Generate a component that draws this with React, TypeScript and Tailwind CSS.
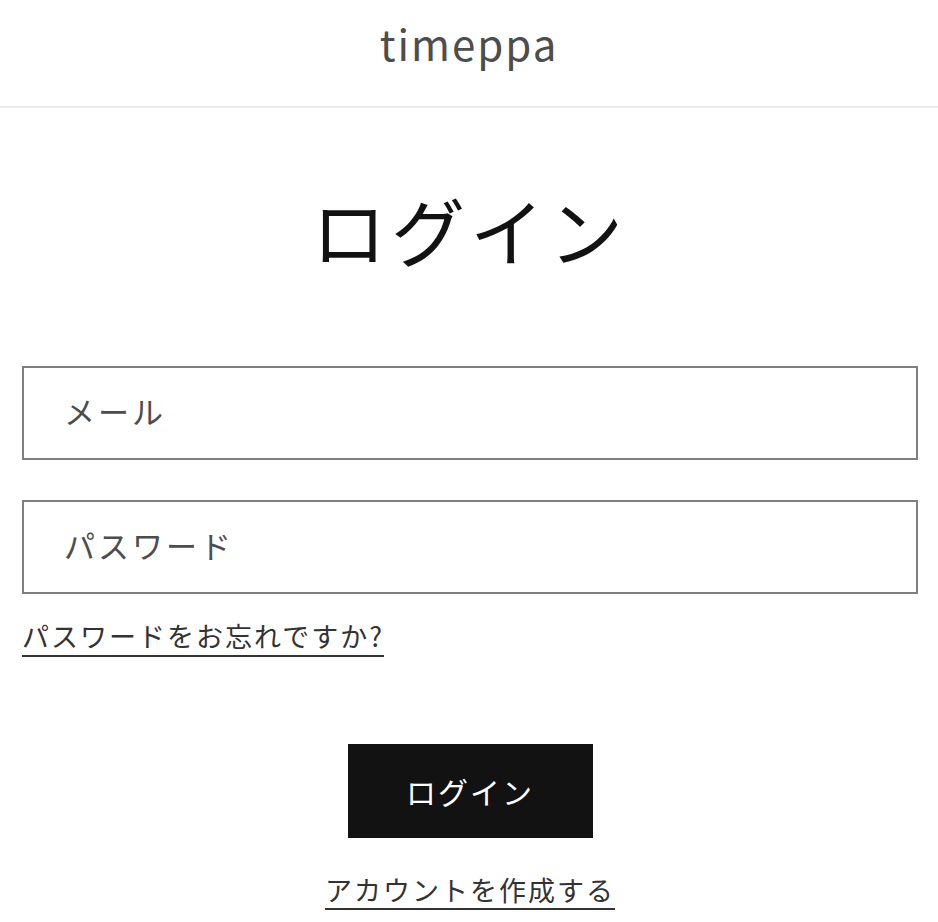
import React from 'react';

const font = { fontFamily: '"Noto Sans CJK JP", "Noto Sans", sans-serif' };

const Field: React.FC<{ label: string; type?: string }> = ({ label, type = 'text' }) => (
  <div className="h-[94px] border-2 border-[#7f7f7f] bg-white flex items-center">
    <input
      type={type}
      placeholder={label}
      className="w-full h-full pl-[40px] pr-4 pb-[6px] bg-transparent outline-none text-[31px] tracking-[3px] text-[#121212] placeholder:text-[#4d4d4d]"
    />
  </div>
);

export default function App() {
  return (
    <div className="min-h-[922px] bg-white text-[#121212]" style={font}>
      <header className="h-[108px] border-b-2 border-[#ebebeb] flex items-center justify-center">
        <span className="text-[42px] tracking-[2px] text-[#4d4d4d] leading-none -mt-[20px]">timeppa</span>
      </header>

      <main className="pl-[22px] pr-[20px] flex flex-col">
        <h1 className="text-center text-[74px] tracking-[5px] leading-none mt-[84px] font-normal">ログイン</h1>

        <form className="mt-[100px] flex flex-col" onSubmit={e => e.preventDefault()}>
          <Field label="メール" type="email" />
          <div className="mt-[40px]">
            <Field label="パスワード" type="password" />
          </div>

          <div className="mt-[28px]">
            <a href="#" className="text-[27px] tracking-[2px] text-[#333] underline decoration-2 underline-offset-[8px] leading-none">
              パスワードをお忘れですか?
            </a>
          </div>

          <div className="flex flex-col items-center mt-[92px]">
            <button className="w-[245px] h-[94px] bg-[#121212] text-white text-[30px] tracking-[2px]">
              ログイン
            </button>
            <a href="#" className="mt-[38px] text-[27px] tracking-[2px] text-[#333] underline decoration-2 underline-offset-[7px] leading-none">
              アカウントを作成する
            </a>
          </div>
        </form>
      </main>
    </div>
  );
}
